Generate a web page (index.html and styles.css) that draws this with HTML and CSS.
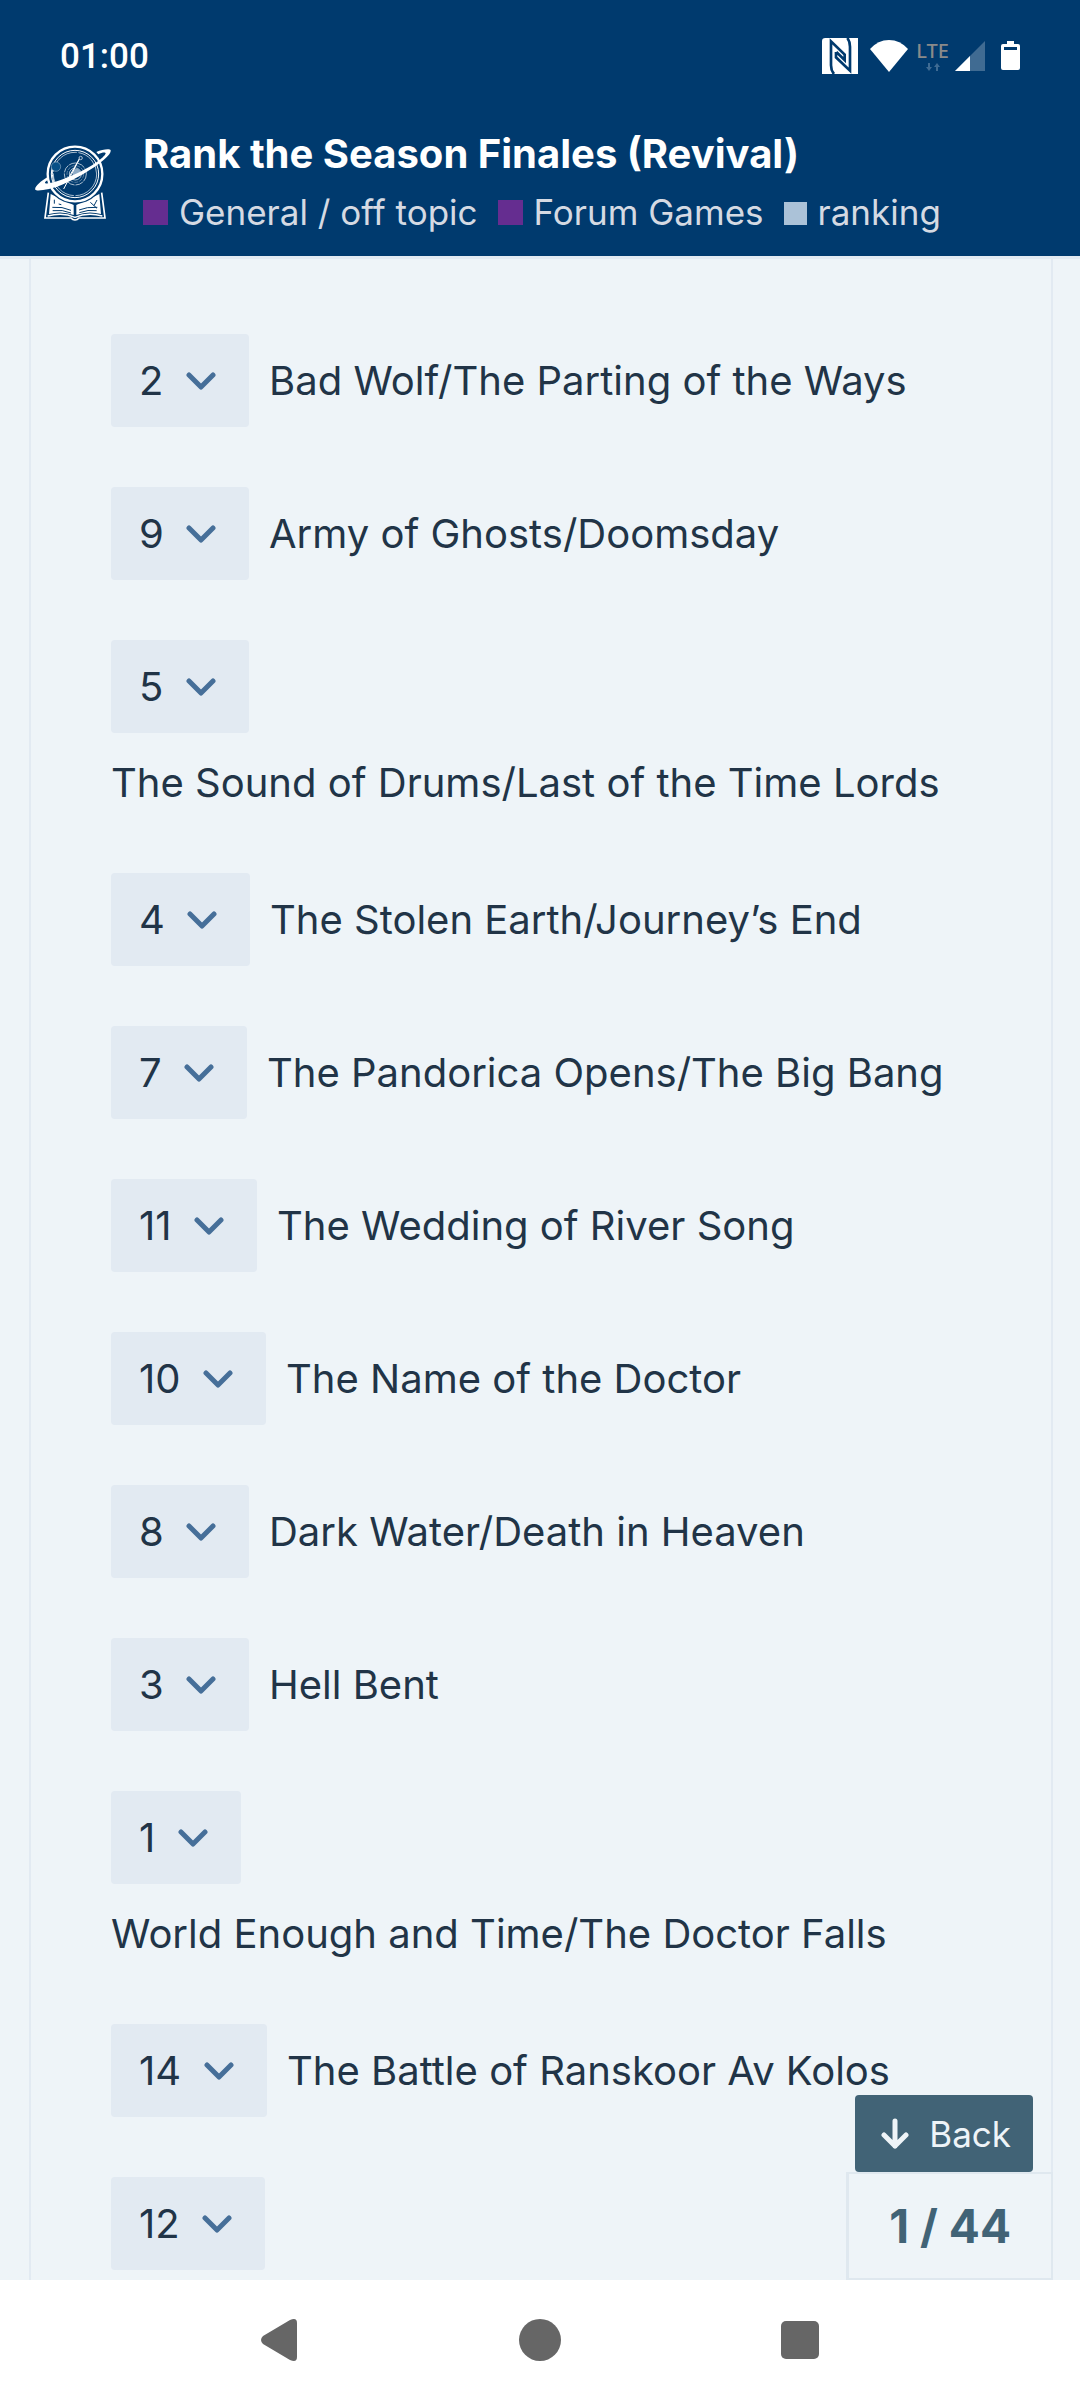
FILE: index.html
```html
<!DOCTYPE html>
<html lang="en">
<head>
  <meta charset="UTF-8">
  <meta name="viewport" content="width=device-width, initial-scale=1">
  <title>Rank the Season Finales (Revival)</title>
  <link rel="stylesheet" href="styles.css">
</head>
<body>

  <header class="header">
    <div class="status-bar">
      <span class="clock">01:00</span>
      <div class="status-icons">
        <svg class="nfc" width="36" height="36" viewBox="0 0 108 108">
          <path fill="#fff" d="M10 0H108V108H0V10Q0 0 10 0Z"/>
          <path fill="none" stroke="#003a6e" stroke-width="8" d="M36 108Q27 98 27 82V10L68 50V66L43 42M76 0Q84 10 84 26V98L42 58V42"/>
        </svg>
        <svg class="wifi" width="38" height="32" viewBox="0 0 38 32">
          <path fill="#fff" d="M19 32L0 9Q8 0 19 0T38 9Z"/>
        </svg>
        <div class="lte">
          <span>LTE</span>
          <svg width="14" height="8" viewBox="0 0 14 8">
            <path fill="#3f6b93" d="M2 0h2v4h2L3 8 0 4h2zM10 8h2V4h2l-3-4-3 4h2z"/>
          </svg>
        </div>
        <svg class="signal" width="30" height="30" viewBox="0 0 30 30">
          <path fill="#406b92" d="M30 0V30H0Z"/>
          <path fill="#fff" d="M15 15V30H0Z"/>
        </svg>
        <svg class="battery" width="19" height="30" viewBox="0 0 19 30">
          <path fill="#fff" d="M6 0h7v3h4q2 0 2 2v22q0 2-2 2H2q-2 0-2-2V5q0-2 2-2h4z"/>
          <path fill="#003a6e" d="M3 6h13v3H3z"/>
        </svg>
      </div>
    </div>

    <div class="topic-bar">
      <a href="#" class="logo" aria-label="Home">
        <svg width="76" height="77" viewBox="45 44 228 231" fill="none" stroke="#fff">
          <!-- open book -->
          <path fill="#fff" stroke="none" d="M92 191L161 224V254Q125 240 87 251Z"/>
          <path fill="#fff" stroke="none" d="M238 191L169 224V254Q205 240 243 251Z"/>
          <path stroke-width="5" d="M85 187L75 263H153Q158 269 165 269T177 263H255L245 187"/>
          <path stroke-width="4" d="M83 257Q128 245 165 261Q202 245 247 257"/>
          <path stroke="#003a6e" stroke-width="3" d="M97 231Q127 228 153 240M98 241Q128 237 153 248M177 239Q200 229 232 231M178 247Q204 237 230 241M103 208v12M211 216l20 18M222 226l9-17M116 221l8 2"/>
          <!-- planet -->
          <circle cx="165" cy="130" r="90" fill="#003a6e" stroke="none"/>
          <circle cx="165" cy="131" r="82" stroke-width="7"/>
          <circle cx="165" cy="131" r="71" stroke-width="3"/>
          <circle cx="165" cy="131" r="65" stroke-width="2" stroke-dasharray="100 5"/>
          <circle cx="166" cy="131" r="33" stroke-width="2" stroke-dasharray="24 3"/>
          <circle cx="166" cy="131" r="25" stroke-width="1" stroke-dasharray="12 3"/>
          <circle cx="166" cy="131" r="18" stroke-width="2"/>
          <circle cx="169" cy="127" r="12" fill="#8eabc6" stroke="none"/>
          <circle cx="108" cy="109" r="14" fill="#075087" stroke-width="1"/>
          <path stroke-width="3" d="M97 119V132Q97 153 110 170M131 176L178 87M147 140L181 80"/>
          <circle cx="182" cy="83" r="5" fill="#003a6e" stroke-width="2"/>
          <!-- ring -->
          <path fill="#fff" stroke="none" fill-rule="evenodd" d="M82 141C61 153 42 171 46 178C50 184 94 177 126 163C190 137 276 80 272 60C270 54 247 57 229 65L235 72C245 67 256 65 257 69C257 77 222 105 184 123C151 139 115 153 91 158C75 161 68 159 84 148Z"/>
        </svg>
      </a>
      <div class="topic-info">
        <h1>Rank the Season Finales (Revival)</h1>
        <div class="tags">
          <a href="#"><span class="square"></span>General / off topic</a>
          <a href="#"><span class="square"></span>Forum Games</a>
          <a href="#"><span class="square tag"></span>ranking</a>
        </div>
      </div>
    </div>
  </header>

  <main class="content">
    <form class="post">
      <div class="poll-option">
        <select id="rank1"><option>2</option></select>
        <label for="rank1">Bad Wolf/The Parting of the Ways</label>
      </div>
      <div class="poll-option">
        <select id="rank2"><option>9</option></select>
        <label for="rank2">Army of Ghosts/Doomsday</label>
      </div>
      <div class="poll-option">
        <select id="rank3"><option>5</option></select>
        <label for="rank3">The Sound of Drums/Last of the Time Lords</label>
      </div>
      <div class="poll-option">
        <select id="rank4"><option>4</option></select>
        <label for="rank4">The Stolen Earth/Journey’s End</label>
      </div>
      <div class="poll-option">
        <select id="rank5"><option>7</option></select>
        <label for="rank5">The Pandorica Opens/The Big Bang</label>
      </div>
      <div class="poll-option">
        <select id="rank6"><option>11</option></select>
        <label for="rank6">The Wedding of River Song</label>
      </div>
      <div class="poll-option">
        <select id="rank7"><option>10</option></select>
        <label for="rank7">The Name of the Doctor</label>
      </div>
      <div class="poll-option">
        <select id="rank8"><option>8</option></select>
        <label for="rank8">Dark Water/Death in Heaven</label>
      </div>
      <div class="poll-option">
        <select id="rank9"><option>3</option></select>
        <label for="rank9">Hell Bent</label>
      </div>
      <div class="poll-option">
        <select id="rank10"><option>1</option></select>
        <label for="rank10">World Enough and Time/The Doctor Falls</label>
      </div>
      <div class="poll-option">
        <select id="rank11"><option>14</option></select>
        <label for="rank11">The Battle of Ranskoor Av Kolos</label>
      </div>
      <div class="poll-option">
        <select id="rank12" aria-label="Rank"><option>12</option></select>
      </div>
    </form>

    <div class="progress">
      <button type="button" class="back">
        <svg width="28" height="32" viewBox="0 0 28 32" fill="none" stroke="#eef4f8" stroke-width="5" stroke-linecap="round" stroke-linejoin="round">
          <path d="M14 3V28M3 17L14 28L25 17"/>
        </svg>
        Back
      </button>
      <button type="button" class="count">1 / 44</button>
    </div>
  </main>

  <nav class="nav-bar">
    <button type="button" aria-label="Back">
      <svg width="42" height="42" viewBox="0 0 42 42"><path fill="#666" d="M4 17L31 1Q38 -2 38 4V38Q38 44 31 41L4 25Q0 21 4 17Z"/></svg>
    </button>
    <button type="button" aria-label="Home">
      <svg width="42" height="42" viewBox="0 0 42 42"><circle cx="21" cy="21" r="21" fill="#666"/></svg>
    </button>
    <button type="button" aria-label="Recent apps">
      <svg width="42" height="42" viewBox="0 0 42 42"><rect x="2" y="2" width="38" height="38" rx="5" fill="#666"/></svg>
    </button>
  </nav>

</body>
</html>
```
FILE: styles.css
```css
* {
  box-sizing: border-box;
}

body {
  margin: 0;
  height: 100vh;
  display: flex;
  flex-direction: column;
  font-family: Inter, sans-serif;
  font-size: 40px;
  background: #eef4f8;
  color: #213447;
}

svg {
  display: block;
}

button {
  border: none;
  padding: 0;
  background: none;
  font-family: inherit;
  cursor: pointer;
}

/* header */
.header {
  background: #003a6e;
  color: #fff;
  padding-bottom: 15px;
}

.status-bar {
  display: flex;
  justify-content: space-between;
  align-items: center;
  height: 112px;
  padding: 0 60px;
}

.clock {
  font-family: Roboto, sans-serif;
  font-size: 35px;
  font-weight: 500;
}

.status-icons {
  display: flex;
  align-items: center;
  gap: 12px;
}

.lte {
  display: flex;
  flex-direction: column;
  align-items: center;
  gap: 2px;
  margin-right: -6px;
  margin-left: -4px;
  font-family: "Noto Sans", sans-serif;
  font-size: 20px;
  font-weight: 500;
  line-height: 20px;
  color: #8a8a8a;
}

.battery {
  margin-left: 4px;
}

.topic-bar {
  display: flex;
  align-items: center;
  gap: 32px;
  padding: 13px 35px 0;
}

.topic-info h1 {
  margin: 0;
  font-size: 40px;
  font-weight: 700;
  line-height: 58px;
}

.tags {
  display: flex;
  flex-wrap: wrap;
  gap: 20px;
  font-size: 35px;
  line-height: 58px;
}

.tags a {
  color: #d5dae3;
  text-decoration: none;
}

.square {
  display: inline-block;
  width: 25px;
  height: 25px;
  margin-right: 11px;
  background: #652d90;
}

.square.tag {
  width: 23px;
  height: 23px;
  background: #abc2d8;
}

/* post with the poll */
.content {
  position: relative;
  flex: 1;
  min-height: 0;
  overflow: hidden;
  padding: 0 27px 0 29px;
  border-top: 3px solid #e2eaf2;
}

.post {
  min-height: 100%;
  padding: 75px 80px 0;
  border: solid #e2eaf2;
  border-width: 0 2px;
}

.poll-option {
  display: flex;
  flex-wrap: wrap;
  align-items: center;
  gap: 20px;
  margin-bottom: 60px;
}

.poll-option:last-child {
  margin-bottom: 0;
}

.poll-option label {
  line-height: 60px;
}

.poll-option select {
  appearance: none;
  height: 93px;
  padding: 0 85px 0 28px;
  border: none;
  border-radius: 4px;
  font-family: inherit;
  font-size: 40px;
  color: inherit;
  background: #e2eaf2 url("data:image/svg+xml,%3Csvg xmlns='http://www.w3.org/2000/svg' width='30' height='18' viewBox='0 0 30 18'%3E%3Cpath d='M3 3L15 15L27 3' fill='none' stroke='%23466f99' stroke-width='5' stroke-linecap='round' stroke-linejoin='round'/%3E%3C/svg%3E") no-repeat right 33px center;
}

/* topic progress, floats over the post */
.progress {
  position: absolute;
  right: 27px;
  bottom: 0;
  display: flex;
  flex-direction: column;
  align-items: flex-end;
}

.back {
  display: flex;
  align-items: center;
  gap: 20px;
  height: 77px;
  margin-right: 20px;
  padding: 0 22px 0 26px;
  border-radius: 4px;
  background: #416376;
  color: #eef4f8;
  font-size: 35px;
}

.count {
  height: 108px;
  padding: 0 40px;
  border: 2px solid #dfe8ef;
  border-left-width: 3px;
  background: #eef4f8;
  color: #416376;
  font-size: 46px;
  font-weight: 700;
}

/* system navigation */
.nav-bar {
  display: flex;
  justify-content: space-around;
  align-items: center;
  height: 120px;
  padding: 0 150px;
  background: #fff;
}
```
